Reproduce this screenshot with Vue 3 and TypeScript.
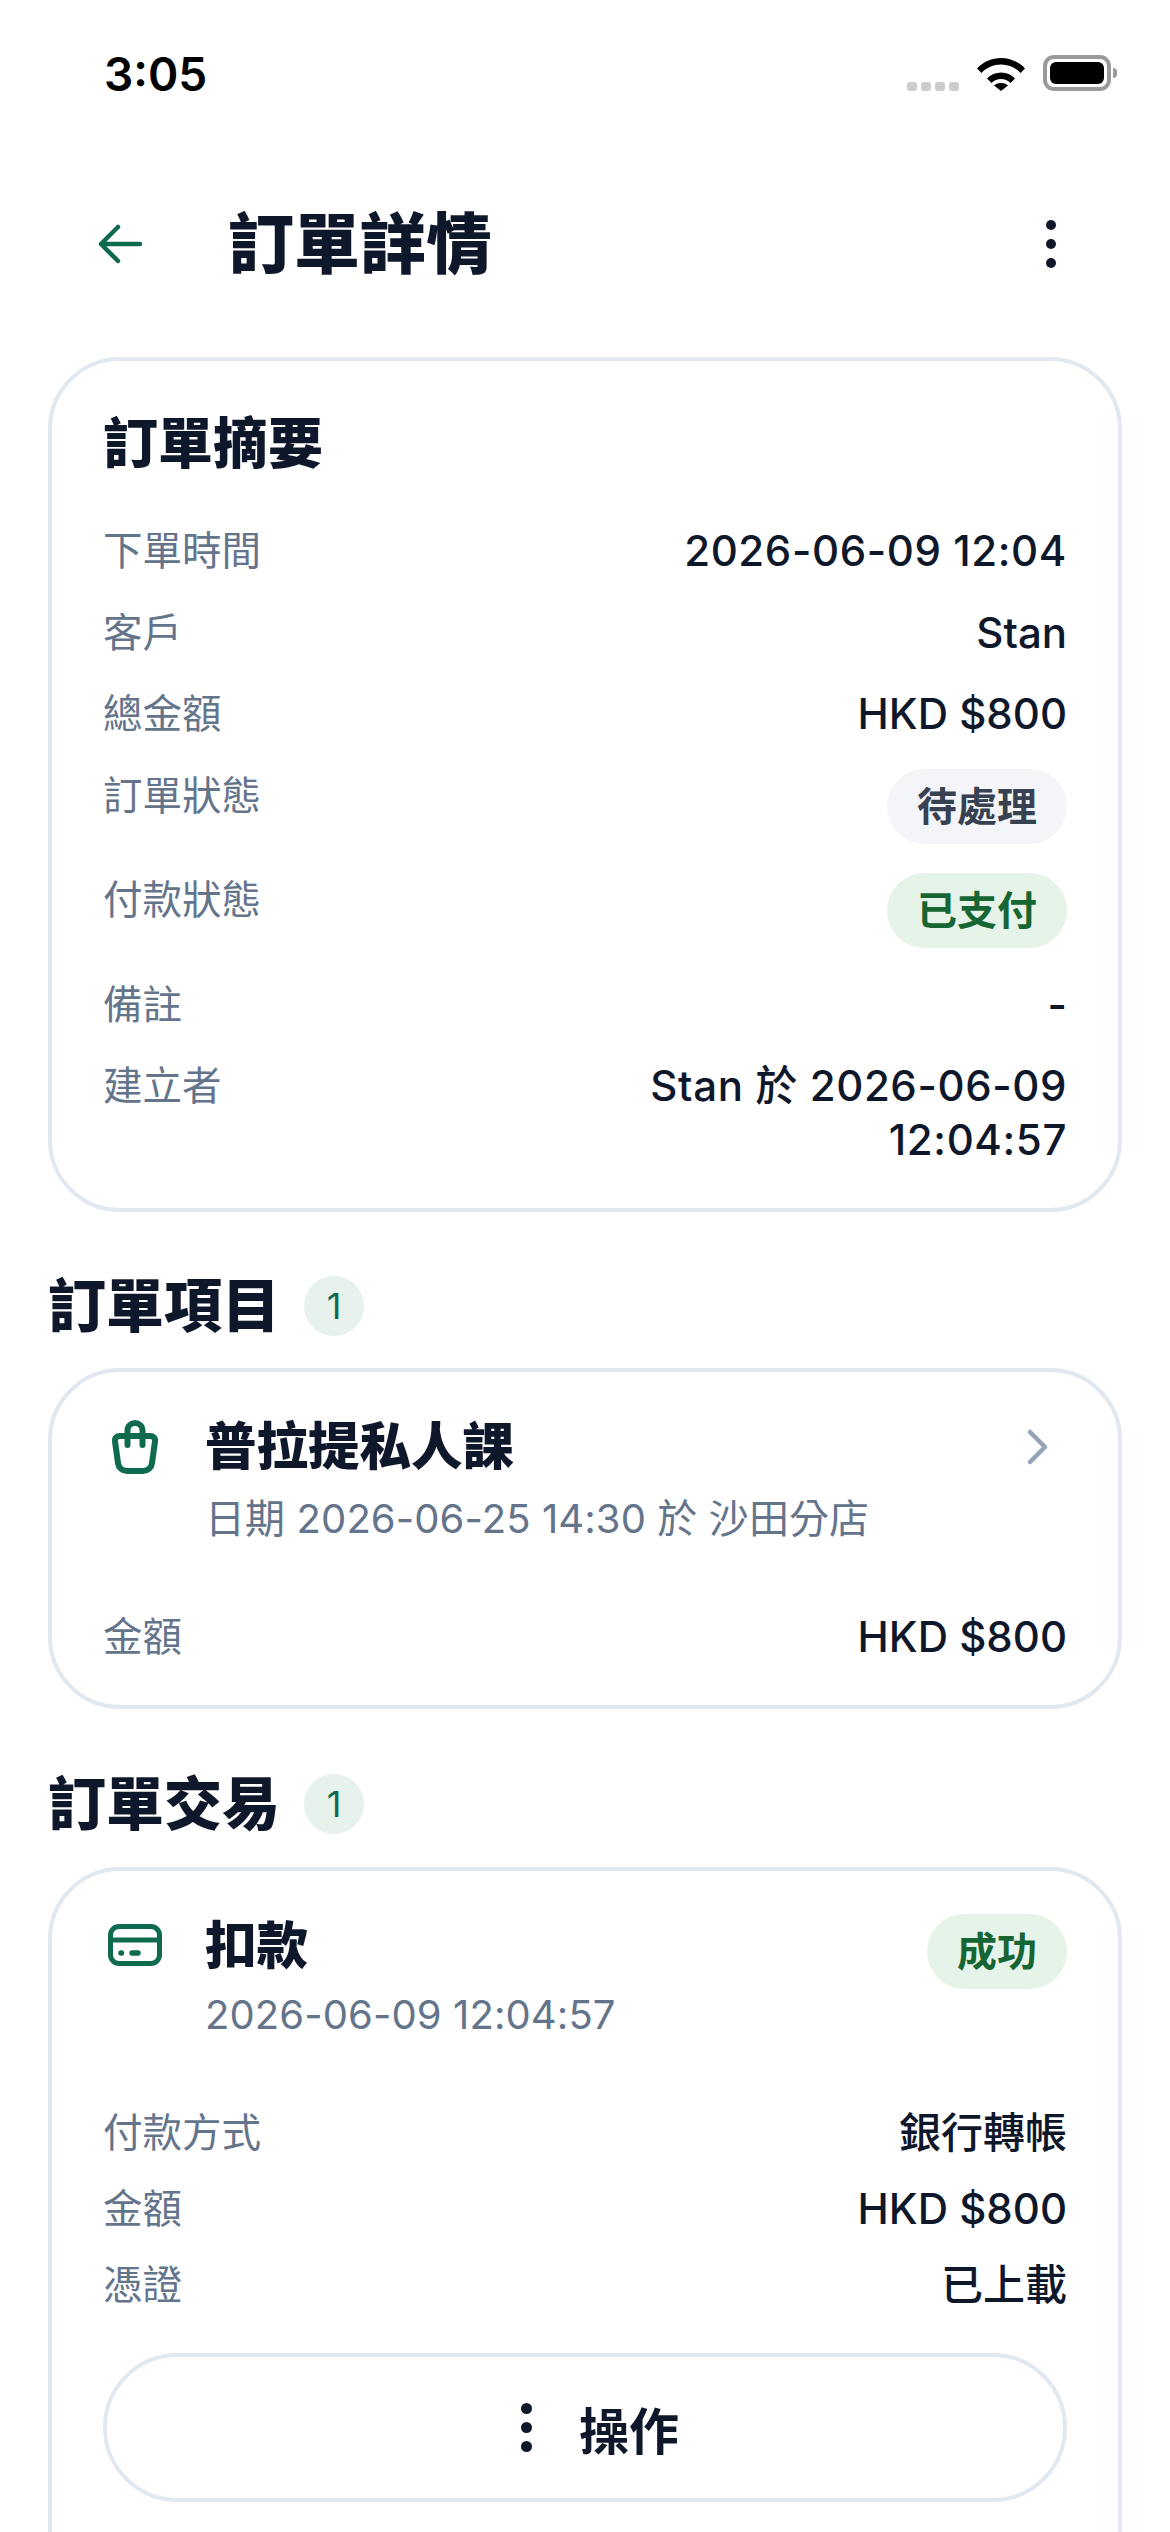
<script setup lang="ts">
const summary = [
  { label: "下單時間", value: "2026-06-09 12:04" },
  { label: "客戶", value: "Stan" },
  { label: "總金額", value: "HKD $800" },
  { label: "訂單狀態", pill: "待處理", tone: "grey" },
  { label: "付款狀態", pill: "已支付", tone: "green" },
  { label: "備註", value: "-" },
  { label: "建立者", value: "Stan 於 2026-06-09 12:04:57" },
];
const txRows = [
  { label: "付款方式", value: "銀行轉帳" },
  { label: "金額", value: "HKD $800" },
  { label: "憑證", value: "已上載" },
];
const isDate = (v?: string) => /\d{4}-/.test(v ?? "");
</script>

<template>
  <div class="page">
    <div class="status">
      <span class="time">3:05</span>
      <div class="status-icons">
        <div class="signal"><i></i><i></i><i></i><i></i></div>
        <svg class="wifi" width="50" height="36" viewBox="0 0 50 36">
          <path d="M1 13.5C7.5 6.5 16 3 25 3s17.5 3.500 24 10.500l-4.500 4.500C39.500 12.500 32.500 9.500 25 9.500S10.500 12.500 5.500 18Z" />
          <path d="M11 23.500C14.500 19.500 19.500 17.500 25 17.500s10.500 2 14 6l-4.500 4.500C32 25.500 28.500 24 25 24s-7 1.500-9.500 4Z" />
          <path d="M18 30.500C19.800 28.800 22.300 28 25 28s5.200.8 7 2.500L25 36Z" />
        </svg>
        <div class="battery"><div class="battery-fill"></div><div class="battery-cap"></div></div>
      </div>
    </div>

    <header class="topbar">
      <svg class="back" width="48" height="42" viewBox="0 0 48 42" fill="none" stroke="#0f6b4f" stroke-width="4.500" stroke-linecap="round" stroke-linejoin="round">
        <path d="M20 4 3 21l17 17M3 21h39" />
      </svg>
      <h1>訂單詳情</h1>
      <div class="dots"><i></i><i></i><i></i></div>
    </header>

    <section class="card summary">
      <h2>訂單摘要</h2>
      <div class="rows">
        <div v-for="r in summary" :key="r.label" class="row">
          <span class="label">{{ r.label }}</span>
          <span v-if="r.pill" class="pill" :class="r.tone">{{ r.pill }}</span>
          <span v-else class="value wrap" :class="{ date: isDate(r.value) }">{{ r.value }}</span>
        </div>
      </div>
    </section>

    <div class="section-head">
      <h3>訂單項目</h3>
      <span class="count">1</span>
    </div>
    <section class="card item">
      <div class="item-top">
        <svg class="icon bag-icon" width="46" height="54" viewBox="0 0 46 54" fill="none" stroke="#0f6b4f" stroke-width="6" stroke-linecap="round" stroke-linejoin="round">
          <path d="M8 16H38C41.500 16 43.500 18 43 21.500L40 43C39.300 48 36 51 31 51H15C10 51 6.700 48 6 43L3 21.500C2.500 18 4.500 16 8 16Z" />
          <path d="M15.500 25V10.500C15.500 6 19 3 23 3S30.500 6 30.500 10.500V25" />
        </svg>
        <div class="item-text">
          <div class="item-title">普拉提私人課</div>
          <div class="sub">日期 2026-06-25 14:30 於 沙田分店</div>
        </div>
        <svg class="chev" width="26" height="38" viewBox="0 0 26 38" fill="none" stroke="#94a3b8" stroke-width="4.500" stroke-linecap="round" stroke-linejoin="round">
          <path d="M5 4l15 15L5 34" />
        </svg>
      </div>
      <div class="row">
        <span class="label">金額</span>
        <span class="value">HKD $800</span>
      </div>
    </section>

    <div class="section-head second">
      <h3>訂單交易</h3>
      <span class="count">1</span>
    </div>
    <section class="card tx">
      <div class="item-top">
        <svg class="icon card-icon" width="54" height="42" viewBox="0 0 54 42" fill="none" stroke="#0f6b4f" stroke-width="5" stroke-linecap="round" stroke-linejoin="round">
          <rect x="2.500" y="2.500" width="49" height="37" rx="8.500" />
          <path d="M2.500 16h49" />
          <path d="M13 29h.5M24 29h6" stroke-width="5.500" />
        </svg>
        <div class="item-text">
          <div class="item-title">扣款</div>
          <div class="sub tight">2026-06-09 12:04:57</div>
        </div>
        <span class="pill green">成功</span>
      </div>
      <div class="rows tx-rows">
        <div v-for="r in txRows" :key="r.label" class="row">
          <span class="label">{{ r.label }}</span>
          <span class="value">{{ r.value }}</span>
        </div>
      </div>
      <button class="action">
        <span class="dots"><i></i><i></i><i></i></span>
        <span>操作</span>
      </button>
    </section>
  </div>
</template>

<style scoped>
.page {
  width: 1170px;
  height: 2532px;
  overflow: hidden;
  background: #fff;
  color: #0f172a;
  font-family: "Inter", "Noto Sans CJK TC", sans-serif;
  box-sizing: border-box;
  padding: 0 48px;
}
.status {
  height: 150px;
  display: flex;
  justify-content: space-between;
  align-items: flex-start;
  padding: 0 11px 0 56px;
}
.time {
  margin-top: 46px;
  font-size: 46px;
  line-height: 56px;
  font-weight: 600;
  color: #000;
}
.status-icons {
  margin-top: 55px;
  display: flex;
  align-items: flex-end;
  height: 36px;
}
.signal {
  display: flex;
  gap: 4px;
  margin-right: 17px;
}
.signal i {
  width: 10px;
  height: 9px;
  border-radius: 3px;
  background: #cccccc;
  display: block;
}
.wifi {
  fill: #000;
  margin-right: 17px;
}
.battery {
  position: relative;
  width: 68px;
  height: 36px;
  box-sizing: border-box;
  border: 4px solid #9a9a9a;
  border-radius: 11px;
  padding: 3px;
}
.battery-fill {
  width: 100%;
  height: 100%;
  background: #000;
  border-radius: 6px;
}
.battery-cap {
  position: absolute;
  right: -10px;
  top: 9px;
  width: 4px;
  height: 10px;
  background: #9a9a9a;
  border-radius: 0 4px 4px 0;
}
.topbar {
  height: 207px;
  box-sizing: border-box;
  display: flex;
  align-items: center;
  padding: 0 66px 20px 50px;
}
.topbar h1 {
  margin: 0 0 0 82px;
  flex: 1;
  font-size: 66px;
  line-height: 84px;
  font-weight: 900;
}
.back {
  flex: none;
}
.dots {
  display: flex;
  flex-direction: column;
  gap: 9px;
}
.dots i {
  display: block;
  width: 10px;
  height: 10px;
  border-radius: 50%;
  background: #0f172a;
}
.card {
  border: 4px solid #e2e8f0;
  border-radius: 72px;
  padding: 41px 51px 52px 51px;
  box-sizing: border-box;
}
.summary {
  height: 855px;
  padding-top: 46px;
}
.summary h2 {
  margin: 0 0 45px;
  font-size: 55px;
  line-height: 72px;
  font-weight: 900;
}
.rows {
  display: flex;
  flex-direction: column;
  gap: 27.5px;
}
.row {
  display: flex;
  justify-content: space-between;
  align-items: flex-start;
}
.label {
  flex: none;
  font-size: 39.5px;
  line-height: 54px;
  color: #64748b;
}
.value {
  font-size: 42px;
  line-height: 54px;
  font-weight: 500;
  text-align: right;
}
.value.wrap {
  max-width: 480px;
}
.value.date {
  letter-spacing: 0.6px;
}
.pill {
  flex: none;
  font-size: 40px;
  line-height: 75px;
  font-weight: 700;
  padding: 0 30px;
  margin-bottom: 2px;
  border-radius: 38px;
}
.pill.grey {
  background: #f3f5f8;
  color: #374151;
}
.pill.green {
  background: #e6f3e8;
  color: #166534;
}
.tx .pill {
  margin-top: 2px;
}
.section-head {
  display: flex;
  align-items: center;
  gap: 24px;
  height: 156px;
  padding-top: 32px;
  box-sizing: border-box;
}
.section-head.second {
  height: 158px;
}
.section-head h3 {
  margin: 0;
  font-size: 58px;
  line-height: 72px;
  font-weight: 900;
}
.count {
  width: 60px;
  height: 60px;
  border-radius: 50%;
  background: #e7f2ec;
  color: #0f6b4f;
  font-size: 36px;
  display: flex;
  align-items: center;
  justify-content: center;
}
.item {
  height: 341px;
}
.item-top {
  display: flex;
  align-items: flex-start;
}
.icon {
  flex: none;
}
.bag-icon {
  margin: 7px 0 0 9px;
}
.card-icon {
  margin: 12px 0 0 5px;
}
.item-text {
  flex: 1;
  margin-left: 47px;
}
.card-icon + .item-text {
  margin-left: 43px;
}
.item-title {
  margin-top: -3px;
  font-size: 51.5px;
  line-height: 72px;
  font-weight: 900;
}
.sub {
  margin-top: 10px;
  font-size: 40px;
  line-height: 54px;
  letter-spacing: 0.1px;
  color: #64748b;
}
.sub.tight {
  margin-top: 7px;
}
.chev {
  margin: 15px 16px 0 0;
}
.item .row {
  margin-top: 64px;
}
.tx {
  height: 800px;
}
.tx-rows {
  margin-top: 64px;
  gap: 22px;
}
.action {
  margin-top: 41px;
  width: 100%;
  height: 149px;
  padding: 0 0 0 30px;
  border: 4px solid #e2e8f0;
  border-radius: 75px;
  background: #fff;
  display: flex;
  align-items: center;
  justify-content: center;
  gap: 47px;
  font-family: inherit;
  font-size: 50px;
  font-weight: 700;
  color: #0f172a;
}
.action .dots {
  gap: 8px;
}
.action .dots i {
  width: 11px;
  height: 11px;
}
</style>
